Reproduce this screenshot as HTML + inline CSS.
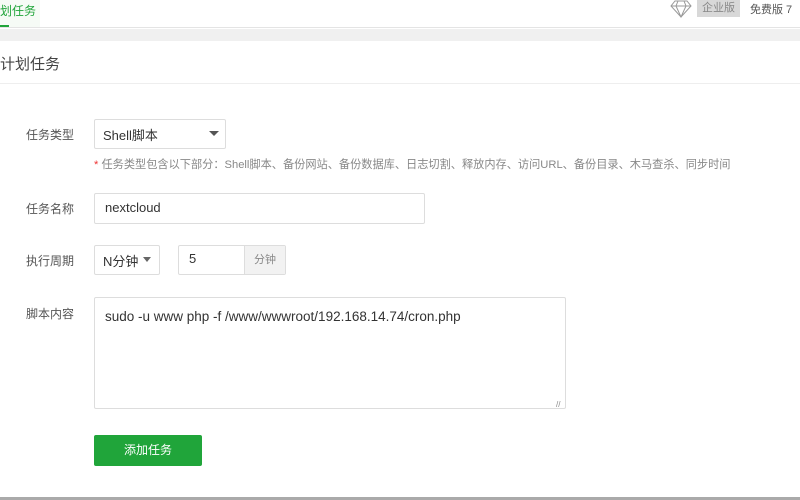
<!DOCTYPE html>
<html><head><meta charset="utf-8"><style>
*{margin:0;padding:0;box-sizing:border-box}
body{width:800px;height:500px;overflow:hidden;background:#fff;font-family:"Liberation Sans","Noto Sans CJK SC",sans-serif;color:#555;position:relative}
.a{position:absolute}
.lbl{font-size:12px;color:#555}
.inp{border:1px solid #ddd;border-radius:2px;background:#fff;font-size:13px;color:#333}
</style></head><body>
<div class="a" style="left:0;top:0;width:800px;height:28px;background:#fff;border-bottom:1px solid #e4e4e4"></div>
<div class="a" style="left:0;top:0;width:40px;height:27px;background:#f6fbf6"></div>
<div class="a" style="left:0;top:2px;font-size:12px;color:#20a53a">划任务</div>
<div class="a" style="left:0;top:25px;width:9px;height:2px;background:#20a53a"></div>
<svg class="a" style="left:670px;top:0" width="22" height="18" viewBox="0 0 22 18"><path d="M5 1h12l4 5-10 11L1 6z M1 6h20 M8 1l-2 5 5 11 5-11-2-5" fill="none" stroke="#999" stroke-width="1"/></svg>
<div class="a" style="left:697px;top:0;width:43px;height:17px;background:#d8d8d8;font-size:11px;color:#888;text-align:center;line-height:17px">企业版</div>
<div class="a" style="left:750px;top:1px;font-size:11px;color:#555">免费版 7</div>
<div class="a" style="left:0;top:29px;width:800px;height:12px;background:#f0f0f0"></div>
<div class="a" style="left:0;top:53px;font-size:15px;color:#444">计划任务</div>
<div class="a" style="left:0;top:83px;width:800px;height:1px;background:#eee"></div>

<div class="a lbl" style="left:26px;top:126px">任务类型</div>
<div class="a inp" style="left:94px;top:119px;width:132px;height:30px;padding:5px 8px">Shell脚本</div>
<div class="a" style="left:209px;top:131px;border:5px solid transparent;border-top:5px solid #555"></div>
<div class="a" style="left:94px;top:156px;font-size:11.2px;color:#888"><span style="color:#e33">*</span> 任务类型包含以下部分：Shell脚本、备份网站、备份数据库、日志切割、释放内存、访问URL、备份目录、木马查杀、同步时间</div>

<div class="a lbl" style="left:26px;top:200px">任务名称</div>
<div class="a inp" style="left:94px;top:193px;width:331px;height:31px;padding:6px 10px">nextcloud</div>

<div class="a lbl" style="left:26px;top:252px">执行周期</div>
<div class="a inp" style="left:94px;top:245px;width:66px;height:30px;padding:5px 8px">N分钟</div>
<div class="a" style="left:143px;top:257px;border:4px solid transparent;border-top:5px solid #666"></div>
<div class="a inp" style="left:178px;top:245px;width:108px;height:30px;padding:5px 10px">5</div>
<div class="a" style="left:244px;top:246px;width:41px;height:28px;background:#f2f2f2;border-left:1px solid #ddd;font-size:11px;color:#888;text-align:center;line-height:28px">分钟</div>

<div class="a lbl" style="left:26px;top:305px">脚本内容</div>
<div class="a inp" style="left:94px;top:297px;width:472px;height:112px;padding:11px 10px;font-size:13.5px">sudo -u www php -f /www/wwwroot/192.168.14.74/cron.php</div>
<div class="a" style="left:556px;top:400px;font-size:8px;color:#888">//</div>

<div class="a" style="left:94px;top:435px;width:108px;height:31px;background:#20a53a;border-radius:2px;color:#fff;font-size:12px;text-align:center;line-height:31px">添加任务</div>
<div class="a" style="left:0;top:497px;width:800px;height:3px;background:#aaa"></div>
</body></html>
